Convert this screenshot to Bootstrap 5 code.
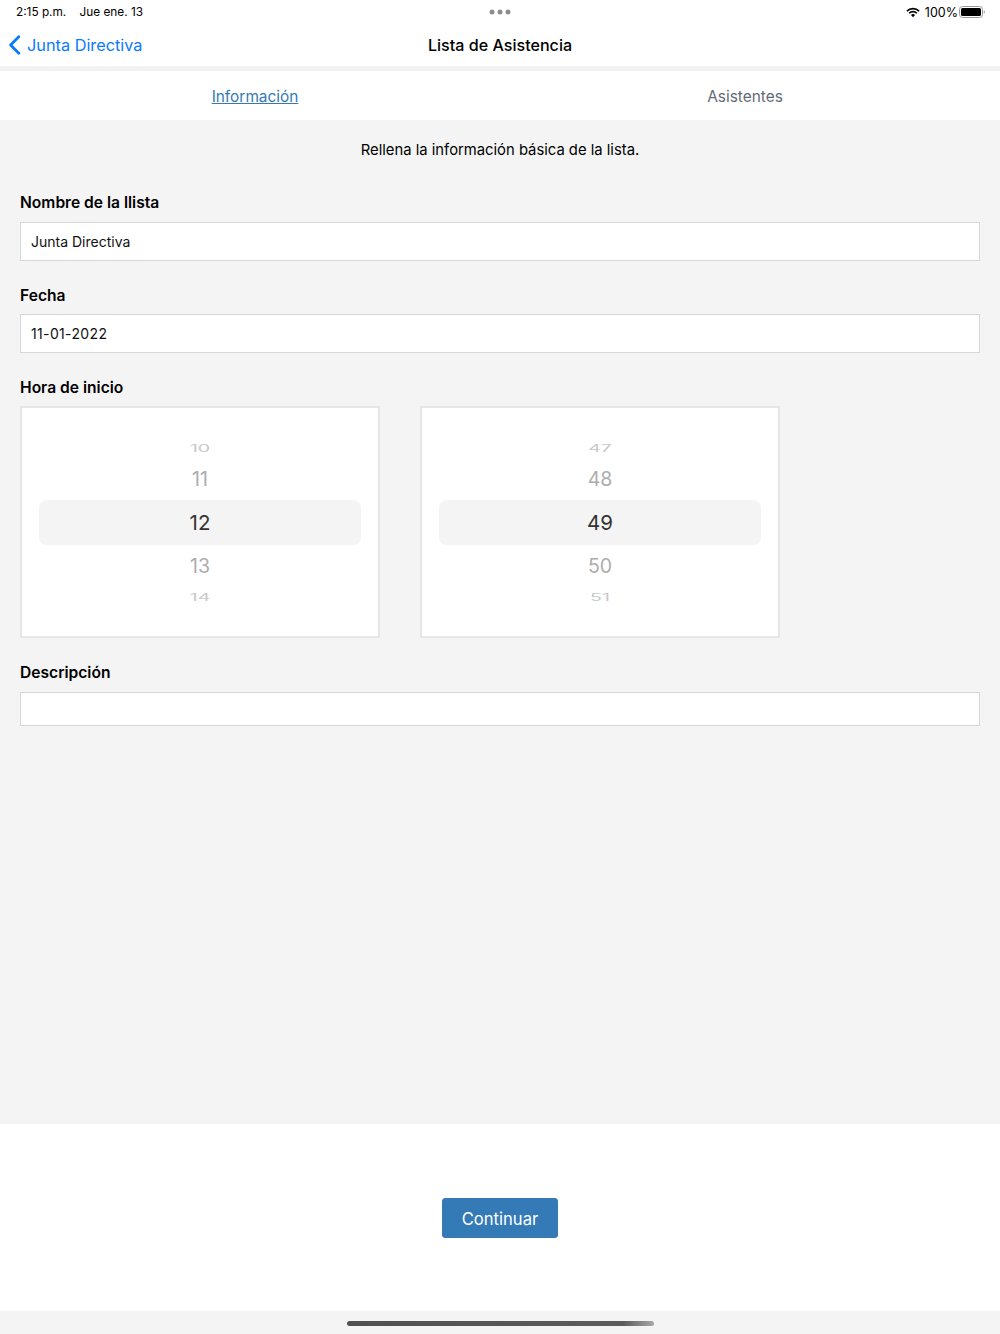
<!DOCTYPE html>
<html lang="es">
  <head>
    <meta charset="UTF-8" />
    <meta name="viewport" content="width=device-width, initial-scale=1.0" />
    <link rel="stylesheet" href="https://cdn.jsdelivr.net/npm/bootstrap@5.3.3/dist/css/bootstrap.min.css" />
    <title>Lista de Asistencia</title>
    <style>
      html, body { height: 1334px; overflow: hidden; }
      body { font-family: Inter, "Liberation Sans", sans-serif; background: #f4f4f4; color: #000; }
      .status-bar { height: 24px; padding: 0 15px 0 16px; font-size: 11.8px; line-height: 24px; background: #fff; }
      .status-date { margin-left: 10px; }
      .status-dots { gap: 3px; }
      .status-dots span { width: 5px; height: 5px; border-radius: 50%; background: #8e8e8e; }
      .battery-level { padding-top: 1px; font-size: 12.5px; margin: 0 1px 0 5px; }
      .top-bar { height: 42px; background: #fff; }
      .back-link { left: 8px; top: 0; height: 42px; gap: 6px; font-size: 16.3px; color: #0a7aff; text-decoration: none; }
      .back-text { padding-top: 1px; }
      .top-title { font-size: 16.1px; font-weight: 500; line-height: 42px; }
      .top-gap { height: 5px; background: #f2f2f2; }
      .tab-strip { height: 49px; padding: 0 10px; background: #fff; border: 0; }
      .tab-strip .nav-link { height: 49px; padding: 0; font-size: 15.4px; line-height: 51px; color: #5f6b76; border: 0; }
      .tab-strip .nav-link.active { color: #337ab7; text-decoration: underline; background: none; }
      .form-area { height: 1004px; padding: 0 20px; }
      .form-hint { font-size: 14.8px; line-height: 20px; padding-top: 20px; margin-bottom: 32px; }
      .field-label { padding-top: 1px; font-size: 15.6px; font-weight: 600; line-height: 20px; margin-bottom: 8px; }
      .field-label-wide { margin-bottom: 9px; }
      .field-input { height: 39px; padding: 0 10px; font-size: 14px; color: #111; border: 1px solid #d6d6d6; border-radius: 0; margin-bottom: 24px; }
      .field-input-date { letter-spacing: .35px; }
      .field-input-short { height: 34px; }
      .picker-row { gap: 40px; margin-bottom: 24px; }
      .picker-box { width: 360px; height: 232px; padding-top: 30px; background: #fff; border: 2px solid #e6e6e6; }
      .wheel-far, .wheel-near, .wheel-now { text-align: center; }
      .wheel-far { height: 20px; line-height: 22px; font-size: 19.5px; color: #c8c8c8; transform: scaleY(.5); }
      .wheel-near { height: 42px; line-height: 42px; font-size: 19.5px; color: #adadad; }
      .wheel-now { height: 45px; margin: 0 17px; line-height: 45px; font-size: 20.5px; color: #333; background: #f4f4f4; border-radius: 8px; }
      .bottom-bar { height: 187px; padding-top: 74px; background: #fff; }
      .continue-btn { width: 116px; height: 40px; padding: 0; font-size: 16.6px; line-height: 40px; color: #fff; background: #337ab7; border-color: #337ab7; border-radius: 3px; }
      .home-strip { height: 23px; padding-top: 10px; background: #f4f4f4; }
      .home-bar { width: 307px; height: 5px; border-radius: 3px; background: linear-gradient(90deg, #505050 0%, #5c5c5c 90%, #a8a8a8 100%); }
    </style>
  </head>
  <body>
    <div class="status-bar d-flex justify-content-between align-items-center position-relative">
      <div><span>2:15 p.m.</span> <span class="status-date">Jue ene. 13</span></div>
      <div class="status-dots d-flex position-absolute top-50 start-50 translate-middle"><span></span><span></span><span></span></div>
      <div class="d-flex align-items-center">
        <svg width="14" height="11" viewBox="0 0 15 11">
          <path d="M1 4a9.2 9.2 0 0 1 13 0" fill="none" stroke="#000" stroke-width="1.7" />
          <path d="M3.4 6.3a5.8 5.8 0 0 1 8.2 0" fill="none" stroke="#000" stroke-width="1.7" />
          <path d="M5.3 8.2a3 3 0 0 1 4.4 0L7.5 10.6z" fill="#000" />
        </svg>
        <span class="battery-level">100%</span>
        <svg width="26" height="12" viewBox="0 0 26 12">
          <rect x=".5" y=".5" width="23" height="11" rx="3" fill="none" stroke="#9a9a9a" />
          <rect x="2" y="2" width="20" height="8" rx="1.6" fill="#000" />
          <path d="M24.8 4.2c.7.2 1 .9 1 1.8s-.3 1.6-1 1.8z" fill="#9a9a9a" />
        </svg>
      </div>
    </div>

    <div class="top-bar position-relative text-center">
      <a class="back-link d-flex align-items-center position-absolute" href="#">
        <svg width="13" height="20" viewBox="0 0 13 20">
          <path d="M10.8 1.8 2.6 10l8.2 8.2" fill="none" stroke="#0a7aff" stroke-width="2.8" stroke-linecap="round" stroke-linejoin="round" />
        </svg>
        <span class="back-text">Junta Directiva</span>
      </a>
      <span class="top-title">Lista de Asistencia</span>
    </div>
    <div class="top-gap"></div>

    <ul class="nav nav-justified tab-strip">
      <li class="nav-item"><a class="nav-link active" href="#">Información</a></li>
      <li class="nav-item"><a class="nav-link" href="#">Asistentes</a></li>
    </ul>

    <form class="form-area">
      <p class="form-hint text-center">Rellena la información básica de la lista.</p>

      <label class="field-label field-label-wide d-block">Nombre de la llista</label>
      <input class="form-control field-input" type="text" value="Junta Directiva" />

      <label class="field-label d-block">Fecha</label>
      <input class="form-control field-input field-input-date" type="text" value="11-01-2022" />

      <label class="field-label d-block">Hora de inicio</label>
      <div class="picker-row d-flex">
        <div class="picker-box">
          <div class="wheel-far">10</div>
          <div class="wheel-near">11</div>
          <div class="wheel-now">12</div>
          <div class="wheel-near">13</div>
          <div class="wheel-far">14</div>
        </div>
        <div class="picker-box">
          <div class="wheel-far">47</div>
          <div class="wheel-near">48</div>
          <div class="wheel-now">49</div>
          <div class="wheel-near">50</div>
          <div class="wheel-far">51</div>
        </div>
      </div>

      <label class="field-label field-label-wide d-block">Descripción</label>
      <input class="form-control field-input field-input-short" type="text" />
    </form>

    <div class="bottom-bar text-center">
      <button class="btn continue-btn" type="button">Continuar</button>
    </div>
    <div class="home-strip"><div class="home-bar mx-auto"></div></div>
  </body>
</html>
